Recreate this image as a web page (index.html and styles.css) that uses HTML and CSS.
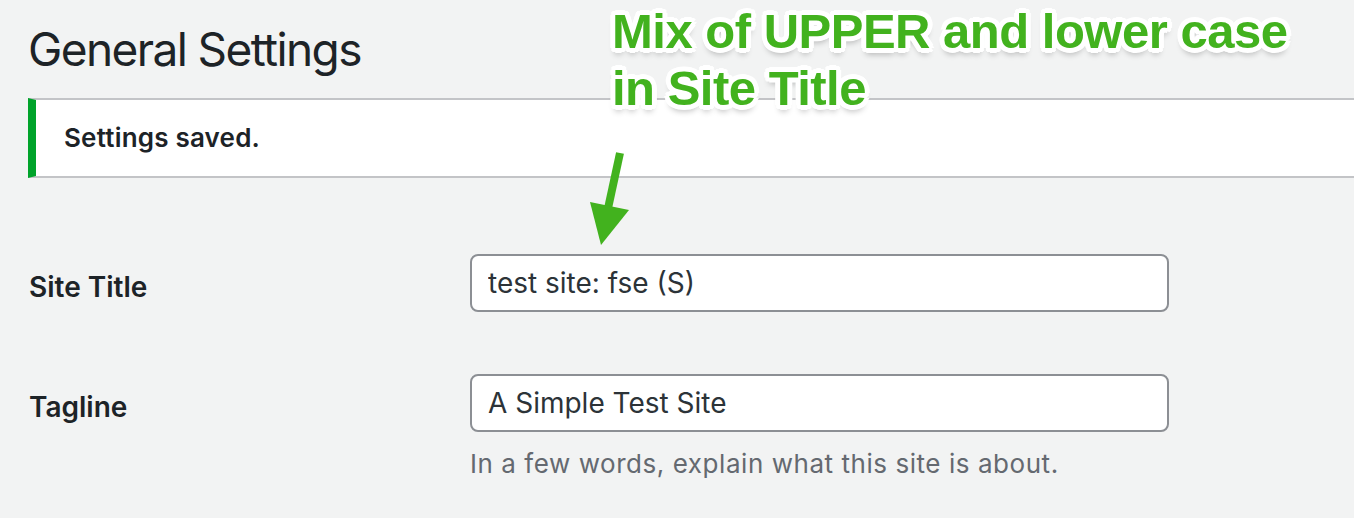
FILE: index.html
```html
<!DOCTYPE html>
<html lang="en">
<head>
<meta charset="utf-8">
<title>General Settings</title>
<link rel="stylesheet" href="styles.css">
</head>
<body>
<div class="wrap">
  <h1 class="title">General Settings</h1>
  <div class="notice"><p>Settings saved.</p></div>
  <form class="form">
    <div class="row row-title">
      <label class="label" for="blogname">Site Title</label>
      <div class="field">
        <input class="input" id="blogname" type="text" value="test site: fse (S)">
      </div>
    </div>
    <div class="row">
      <label class="label" for="blogdescription">Tagline</label>
      <div class="field">
        <input class="input" id="blogdescription" type="text" value="A Simple Test Site">
        <p class="description">In a few words, explain what this site is about.</p>
      </div>
    </div>
  </form>
</div>
<div class="callout">Mix of UPPER and lower case<br>in Site Title</div>
<svg class="arrow" width="60" height="105" viewBox="0 0 60 105" aria-hidden="true">
  <line x1="40" y1="8" x2="27" y2="68" stroke="#42b21e" stroke-width="8"/>
  <polygon points="10,57 49,65 21,100" fill="#42b21e"/>
</svg>
</body>
</html>
```

FILE: styles.css
```css
html, body {
  margin: 0;
  padding: 0;
}
body {
  background: #f2f3f3;
  font-family: Inter, "Noto Sans", "Liberation Sans", sans-serif;
  color: #1d2327;
  width: 1354px;
  height: 518px;
  overflow: hidden;
  position: relative;
}
.wrap {
  padding: 19px 0 0 28px;
  overflow: hidden;
}
.title {
  margin: 0;
  font-size: 46px;
  line-height: 60px;
  font-weight: 400;
  color: #1d2327;
  letter-spacing: -1.6px;
}
.notice {
  margin-top: 19px;
  margin-right: -40px;
  background: #fff;
  border-left: 8px solid #00a32a;
  border-top: 2px solid #c3c4c7;
  border-bottom: 2px solid #c3c4c7;
  padding: 20px 0 20px 28px;
}
.notice p {
  margin: 0;
  font-size: 26px;
  line-height: 36px;
  font-weight: 600;
  color: #1d2327;
  letter-spacing: 0.2px;
}
.form {
  margin-top: 76px;
}
.row {
  display: grid;
  grid-template-columns: 442px 699px;
  align-items: start;
}
.row-title {
  margin-bottom: 62px;
}
.label {
  padding-top: 15px;
  font-size: 28px;
  line-height: 36px;
  font-weight: 600;
  color: #1d2327;
  padding-left: 1px;
}
.field {
  display: flex;
  flex-direction: column;
}
.input {
  box-sizing: border-box;
  width: 699px;
  height: 58px;
  margin: 0;
  border: 2px solid #8c8f94;
  border-radius: 8px;
  background: #fff;
  padding: 0 16px;
  font-family: Inter, "Noto Sans", "Liberation Sans", sans-serif;
  font-size: 28px;
  line-height: 54px;
  color: #2c3338;
  outline: none;
}
.description {
  margin: 14px 0 0 0;
  font-size: 26px;
  line-height: 36px;
  color: #646970;
  letter-spacing: 0.55px;
}
.callout {
  position: absolute;
  left: 612px;
  top: 3px;
  font-family: "Liberation Sans", Arial, sans-serif;
  font-weight: 700;
  font-size: 49px;
  line-height: 57px;
  letter-spacing: -0.5px;
  color: #42b21e;
  white-space: nowrap;
  text-shadow:
    5px 0 0 #fff, -5px 0 0 #fff, 0 5px 0 #fff, 0 -5px 0 #fff,
    4px 3px 0 #fff, -4px 3px 0 #fff, 4px -3px 0 #fff, -4px -3px 0 #fff,
    3px 4px 0 #fff, -3px 4px 0 #fff, 3px -4px 0 #fff, -3px -4px 0 #fff,
    2px 2px 0 #fff, -2px 2px 0 #fff, 2px -2px 0 #fff, -2px -2px 0 #fff,
    0 6px 6px rgba(0,0,0,0.3);
}
.arrow {
  position: absolute;
  left: 580px;
  top: 145px;
}
```
